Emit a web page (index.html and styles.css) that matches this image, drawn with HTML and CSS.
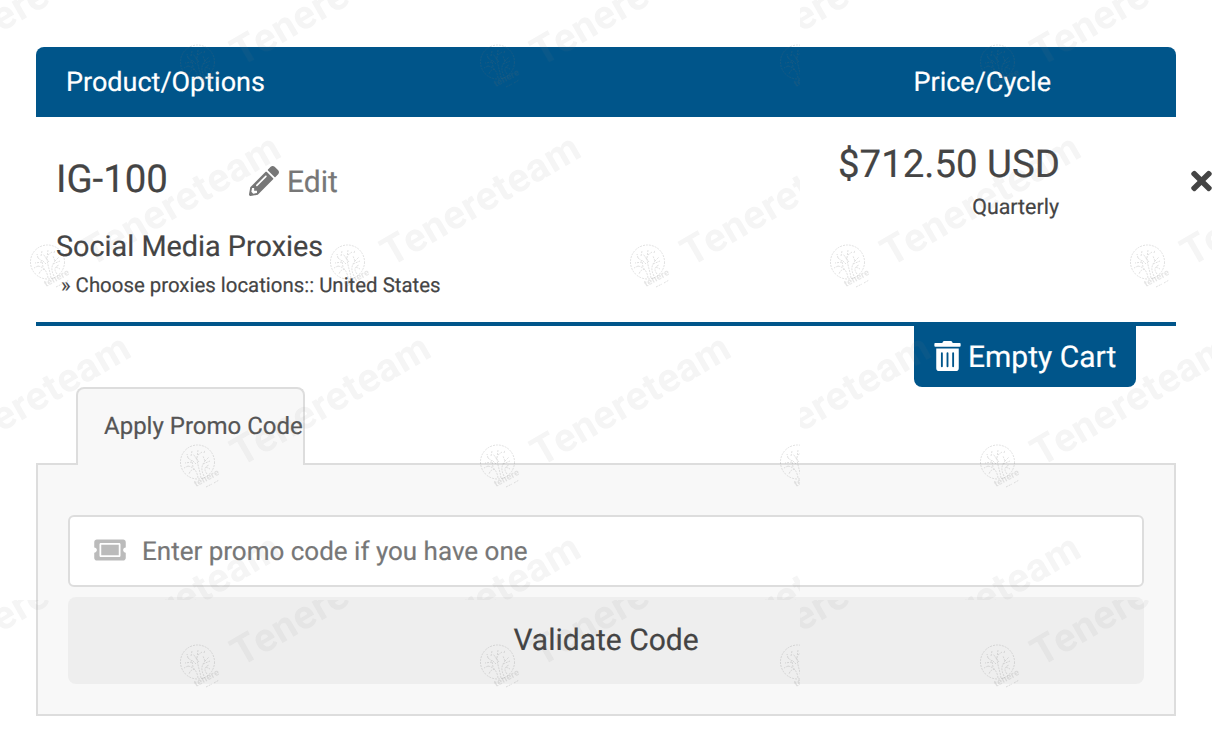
FILE: index.html
```
<!DOCTYPE html>
<html lang="en">
<head>
	<meta charset="UTF-8">
	<title>Cart</title>
	<link rel="stylesheet" href="styles.css">
</head>
<body>
	<div class="cart">
		<div class="cart-header">
			<span>Product/Options</span>
			<span>Price/Cycle</span>
		</div>

		<div class="item">
			<div class="item-info">
				<div class="item-top">
					<span class="item-title">IG-100</span>
					<a href="#" class="edit">
						<svg width="30" height="30" viewBox="0 0 512 512"><path d="M497.9 142.1l-46.1 46.1c-4.7 4.7-12.3 4.7-17 0l-111-111c-4.7-4.7-4.7-12.3 0-17l46.1-46.1c18.7-18.7 49.1-18.7 67.9 0l60.1 60.1c18.8 18.7 18.8 49.1 0 67.9zM284.2 99.8L21.6 362.4.4 483.9c-2.9 16.4 11.4 30.6 27.8 27.8l121.5-21.3 262.6-262.6c4.7-4.7 4.7-12.3 0-17l-111-111c-4.8-4.7-12.4-4.7-17.1 0zM124.1 339.9c-5.5-5.5-5.5-14.3 0-19.8l154-154c5.5-5.5 14.3-5.5 19.8 0s5.5 14.3 0 19.8l-154 154c-5.5 5.5-14.3 5.5-19.8 0zM88 424h48v36.3l-64.5 11.3-31.1-31.1L51.7 376H88v48z"/></svg>
						<span>Edit</span>
					</a>
				</div>
				<div class="item-group">Social Media Proxies</div>
				<div class="item-option">» Choose proxies locations:: United States</div>
			</div>
			<div class="item-price">
				<div class="price">$712.50 USD</div>
				<div class="cycle">Quarterly</div>
			</div>
			<a href="#" class="remove">
				<svg width="21" height="30" viewBox="0 0 352 512"><path d="M242.72 256l100.07-100.07c12.28-12.28 12.28-32.19 0-44.48l-22.24-22.24c-12.28-12.28-32.19-12.28-44.48 0L176 189.28 75.93 89.21c-12.28-12.28-32.19-12.28-44.48 0L9.21 111.45c-12.28 12.28-12.28 32.19 0 44.48L109.28 256 9.21 356.07c-12.28 12.28-12.28 32.19 0 44.48l22.24 22.24c12.28 12.28 32.2 12.28 44.48 0L176 322.72l100.07 100.07c12.28 12.28 32.2 12.28 44.48 0l22.24-22.24c12.28-12.28 12.28-32.19 0-44.48L242.72 256z"/></svg>
			</a>
		</div>

		<div class="empty-row">
			<a href="#" class="empty">
				<svg width="27" height="30" viewBox="0 0 448 512"><path d="M32 464a48 48 0 0 0 48 48h288a48 48 0 0 0 48-48V128H32zm272-256a16 16 0 0 1 32 0v224a16 16 0 0 1-32 0zm-96 0a16 16 0 0 1 32 0v224a16 16 0 0 1-32 0zm-96 0a16 16 0 0 1 32 0v224a16 16 0 0 1-32 0zM432 32H312l-9.4-18.7A24 24 0 0 0 281.1 0H166.8a23.72 23.72 0 0 0-21.4 13.3L136 32H16A16 16 0 0 0 0 48v32a16 16 0 0 0 16 16h416a16 16 0 0 0 16-16V48a16 16 0 0 0-16-16z"/></svg>
				<span>Empty Cart</span>
			</a>
		</div>

		<!-- promo code -->
		<div class="tab">Apply Promo Code</div>
		<div class="promo">
			<label class="field">
				<svg width="32" height="28" viewBox="0 0 576 512"><path d="M128 160h320v192H128V160zm400 96c0 26.51 21.49 48 48 48v96c0 26.51-21.49 48-48 48H48c-26.51 0-48-21.49-48-48v-96c26.51 0 48-21.49 48-48s-21.49-48-48-48v-96c0-26.51 21.49-48 48-48h480c26.51 0 48 21.49 48 48v96c-26.51 0-48 21.49-48 48zm-48-104c0-13.255-10.745-24-24-24H120c-13.255 0-24 10.745-24 24v208c0 13.255 10.745 24 24 24h336c13.255 0 24-10.745 24-24V152z"/></svg>
				<input type="text" placeholder="Enter promo code if you have one">
			</label>
			<button class="validate">Validate Code</button>
		</div>
	</div>

	<!-- watermark, 800x600 tile -->
	<svg class="watermark" width="1212" height="730">
		<defs>
			<g id="stamp">
				<g class="logo">
					<circle cx=".5" r="17"/>
					<path d="M1 16C0 8 -4 5 -9 4M4 16C3 9 1 5 0 -3M7 14C4 8 4 4 8 -1M10 12C7 8 7 5 12 3M-2 7C-6 8 -7 9 -8 12M-4 5L-5 -1L-9 -4M-5 0L-12 1M-9 4L-13 6M0 -3L-4 -8M0 -4L1 -12M1 -7L5 -10M2 0L-2 -5M8 -1L6 -6M8 -1L12 -5M6 2L13 -1M-6 -6L-5 -11M-9 -4L-10 -8M9 5L13 7M7 -9L8 -12M-1 2L-5 -2"/>
				</g>
				<text class="logo-text" x="-1" y="25" transform="rotate(-28 -1 25)" textLength="27">tenere</text>
				<path class="logo" d="M9 25L15 22M17 21L22 18"/>
				<text class="name" x="44" y="5" transform="rotate(-30 44 5)" textLength="222">Tenereteam</text>
			</g>
			<pattern id="tile" width="800" height="600" patternUnits="userSpaceOnUse">
				<use href="#stamp" x="-103" y="62"/>
				<use href="#stamp" x="197" y="62"/>
				<use href="#stamp" x="497" y="62"/>
				<use href="#stamp" x="797" y="62"/>
				<use href="#stamp" x="47" y="262"/>
				<use href="#stamp" x="347" y="262"/>
				<use href="#stamp" x="647" y="262"/>
				<use href="#stamp" x="-103" y="462"/>
				<use href="#stamp" x="197" y="462"/>
				<use href="#stamp" x="497" y="462"/>
				<use href="#stamp" x="797" y="462"/>
				<use href="#stamp" x="47" y="662"/>
				<use href="#stamp" x="347" y="662"/>
				<use href="#stamp" x="647" y="662"/>
			</pattern>
		</defs>
		<rect width="1212" height="730" fill="url(#tile)"/>
	</svg>
</body>
</html>
```
FILE: styles.css
```
*{
	margin: 0;
	padding: 0;
	box-sizing: border-box;
}
body {
	position: relative;
	height: 730px;
	overflow: hidden;
	background: #fff;
	color: #444;
	font-family: Roboto, sans-serif;
	text-rendering: geometricPrecision;
}
a{
	color: inherit;
	text-decoration: none;
}
svg{
	display: block;
	flex: none;
	fill: currentColor;
}
.cart{
	width: 1140px;
	margin: 0 36px;
	padding-top: 47px;
	-webkit-text-stroke: .2px;
}
.cart-header{
	display: flex;
	justify-content: space-between;
	height: 70px;
	padding: 0 125px 0 30px;
	line-height: 70px;
	border-radius: 8px 8px 0 0;
	background: #00558a;
	color: #fff;
	font-size: 27px;
}
.item{
	display: flex;
	height: 209px;
	padding-left: 20px;
	border-bottom: 4px solid #00558a;
}
.item-info{
	flex: 1;
	padding-top: 40px;
}
.item-top{
	display: flex;
}
.item-title{
	width: 193px;
	font-size: 38.4px;
	line-height: 46px;
}
.edit{
	display: flex;
	gap: 8px;
	height: 30px;
	margin-top: 9px;
	color: #777;
	font-size: 30px;
	line-height: 33px;
}
.item-group{
	margin-top: 26px;
	font-size: 28.8px;
	line-height: 36px;
}
.item-option{
	margin-top: 7px;
	padding-left: 5px;
	font-size: 20.4px;
	line-height: 26px;
}
.item-price{
	padding-top: 25px;
	text-align: right;
}
.price{
	font-size: 38.4px;
	line-height: 46px;
}
.cycle{
	margin-top: 5px;
	padding-right: 1px;
	font-size: 21.4px;
	line-height: 30px;
}
.remove{
	margin: 49px -36px 0 131px;
}
.empty-row{
	display: flex;
	justify-content: flex-end;
	padding-right: 40px;
}
.empty{
	display: flex;
	align-items: center;
	gap: 7px;
	width: 222px;
	height: 61px;
	padding-left: 20px;
	border-radius: 0 0 8px 8px;
	background: #00558a;
	color: #fff;
	font-size: 30px;
}
.empty svg{
	margin-bottom: 2px;
}
.empty span{
	padding-top: 2px;
}
.tab{
	position: relative;
	width: 229px;
	height: 78px;
	margin: 0 0 -2px 40px;
	padding: 22px 0 0 26px;
	border: 2px solid #ddd;
	border-bottom: 0;
	border-radius: 8px 8px 0 0;
	background: #f8f8f8;
	color: #555;
	font-size: 24px;
	line-height: 30px;
	white-space: nowrap;
}
.promo{
	height: 253px;
	padding: 50px 30px 30px;
	border: 2px solid #ddd;
	background: #f8f8f8;
}
.field{
	display: flex;
	align-items: center;
	gap: 16px;
	height: 72px;
	margin-bottom: 10px;
	padding: 0 24px;
	border: 2px solid #ddd;
	border-radius: 6px;
	background: #fff;
	color: #bbb;
}
.field svg{
	margin-bottom: 3px;
}
.field input{
	flex: 1;
	padding-top: 2px;
	border: 0;
	outline: 0;
	background: none;
	font: 26px Roboto, sans-serif;
	text-rendering: inherit;
}
.field input::placeholder{
	color: #777;
}
.validate{
	display: block;
	width: 100%;
	height: 87px;
	border: 0;
	border-radius: 8px;
	background: #eee;
	color: #444;
	font: 30px Roboto, sans-serif;
	text-rendering: inherit;
}
.watermark{
	position: absolute;
	top: 0;
	left: 0;
	pointer-events: none;
}
.logo{
	fill: none;
	stroke: #666;
	stroke-width: 1;
	stroke-dasharray: 2 1;
	opacity: .2;
}
.logo-text{
	fill: #666;
	opacity: .17;
	font: bold 9px Roboto, sans-serif;
}
.name{
	fill: #777;
	opacity: .08;
	font: bold 40px Roboto, sans-serif;
}
```
